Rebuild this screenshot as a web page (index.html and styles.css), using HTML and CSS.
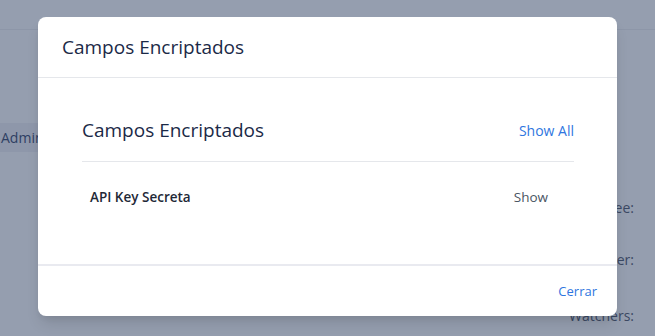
FILE: index.html
```html
<!DOCTYPE html>
<html lang="es">
<head>
<meta charset="utf-8">
<title>Campos Encriptados</title>
<link rel="stylesheet" href="styles.css">
</head>
<body>
<div class="page">
  <div class="topbar"></div>
  <div class="page-body">
    <div class="side">
      <div class="side-item">Admin</div>
    </div>
    <div class="meta">
      <div class="meta-label l1">Assignee:</div>
      <div class="meta-label l2">Reporter:</div>
      <div class="meta-label l3">Watchers:</div>
    </div>
  </div>
</div>
<div class="overlay">
  <div class="modal">
    <div class="modal-header">
      <h2 class="modal-title">Campos Encriptados</h2>
    </div>
    <div class="modal-body">
      <div class="section">
        <div class="section-head">
          <h3 class="section-title">Campos Encriptados</h3>
          <a class="link show-all">Show All</a>
        </div>
        <div class="field-row">
          <span class="field-name">API Key Secreta</span>
          <a class="field-action">Show</a>
        </div>
      </div>
    </div>
    <div class="modal-footer">
      <a class="link close">Cerrar</a>
    </div>
  </div>
</div>
</body>
</html>
```
FILE: styles.css
```css
html, body {
  margin: 0;
  padding: 0;
}
body {
  width: 655px;
  height: 336px;
  overflow: hidden;
  font-family: "Open Sans", "Noto Sans", sans-serif;
  background: #f3f4f6;
  position: relative;
}
.page {
  height: 336px;
  display: flex;
  flex-direction: column;
}
.topbar {
  height: 29px;
  background: #f3f4f6;
  border-bottom: 1px solid #e2e4e8;
  flex: none;
}
.page-body {
  flex: 1;
  display: flex;
  justify-content: space-between;
}
.side {
  padding-top: 93px;
  width: 120px;
}
.side-item {
  height: 29px;
  line-height: 29px;
  background: #e4e7ec;
  color: #24365e;
  font-size: 14px;
  padding-left: 1px;
}
.meta {
  padding-right: 21px;
  text-align: right;
  color: #3f4a5e;
  font-size: 14px;
}
.meta-label {
  line-height: 20px;
}
.l1 { margin-top: 168px; }
.l2 { margin-top: 32px; }
.l3 { margin-top: 36px; }

.overlay {
  position: absolute;
  inset: 0;
  background: rgba(55, 72, 104, 0.5);
  display: flex;
  justify-content: center;
  align-items: flex-start;
  padding-top: 17px;
}
.modal {
  width: 579px;
  height: 299px;
  background: #ffffff;
  border-radius: 8px;
  box-shadow: 0 10px 15px -3px rgba(0,0,0,0.12), 0 4px 6px -2px rgba(0,0,0,0.06);
  display: flex;
  flex-direction: column;
  overflow: hidden;
}
.modal-header {
  height: 61px;
  box-sizing: border-box;
  border-bottom: 1px solid #e5e7eb;
  padding: 0 24px;
  display: flex;
  align-items: center;
}
.modal-title {
  margin: 0;
  font-size: 19px;
  font-weight: 400;
  color: #1b2a47;
  line-height: 28px;
}
.modal-body {
  flex: 1;
  padding: 38px 43px 0 44px;
  border-bottom: 2px solid #e9eaf0;
}
.section-head {
  display: flex;
  justify-content: space-between;
  align-items: center;
  padding-bottom: 17px;
  border-bottom: 1px solid #e5e7eb;
}
.section-title {
  margin: 0;
  font-size: 19px;
  font-weight: 400;
  color: #1b2a47;
  line-height: 28px;
}
.link {
  color: #2f76e0;
  text-decoration: none;
}
.show-all {
  font-size: 14px;
}
.close {
  font-size: 13px;
}
.field-row {
  display: flex;
  justify-content: space-between;
  align-items: center;
  padding: 26px 26px 0 8px;
}
.field-name {
  font-size: 13.5px;
  font-weight: 600;
  color: #1f2937;
}
.field-action {
  font-size: 13.5px;
  color: #4b5563;
}
.modal-footer {
  height: 50px;
  display: flex;
  justify-content: flex-end;
  align-items: center;
  padding-right: 20px;
}
```
